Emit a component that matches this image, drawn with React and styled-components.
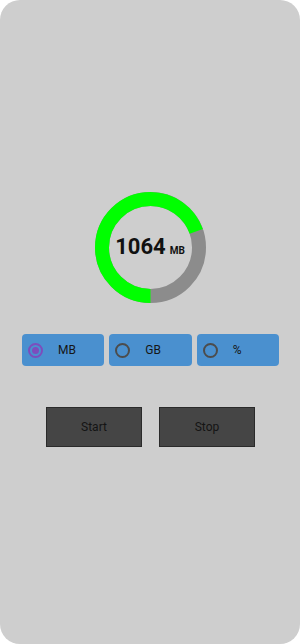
import React, { useState } from "react";
import styled, { createGlobalStyle } from "styled-components";

const GlobalStyle = createGlobalStyle`
  html, body {
    margin: 0;
    padding: 0;
    background: #ffffff;
    font-family: Roboto, "Noto Sans", sans-serif;
  }
`;

const UNITS = ["MB", "GB", "%"];

const Screen = styled.div`
  width: 300px;
  height: 644px;
  box-sizing: border-box;
  background: #cecece;
  border-radius: 20px;
  padding-top: 192px;
  display: flex;
  flex-direction: column;
  align-items: center;
`;

const Gauge = styled.div`
  position: relative;
  width: 111px;
  height: 111px;
`;

const GaugeLabel = styled.div`
  position: absolute;
  inset: 0;
  display: flex;
  align-items: baseline;
  justify-content: center;
  gap: 4px;
  padding-top: 44px;
  box-sizing: border-box;
  color: #111;
  font-weight: 700;
`;

const Value = styled.span`
  font-size: 22px;
  line-height: 1;
`;

const Unit = styled.span`
  font-size: 10px;
`;

const RadioRow = styled.div`
  align-self: stretch;
  display: flex;
  gap: 5px;
  padding: 0 21px 0 22px;
  margin-top: 31px;
`;

const RadioBox = styled.label`
  flex: 1;
  height: 32px;
  border-radius: 4px;
  background: #4a90cf;
  display: flex;
  align-items: center;
  padding-left: 6px;
  gap: 15px;
  cursor: pointer;
  color: #161616;
  font-size: 12px;
`;

const Dot = styled.span`
  width: 15px;
  height: 15px;
  box-sizing: border-box;
  border-radius: 50%;
  border: 2px solid ${p => (p.$on ? "#7c4dbd" : "#4c4c4c")};
  display: flex;
  align-items: center;
  justify-content: center;
  &::after {
    content: "";
    width: 7px;
    height: 7px;
    border-radius: 50%;
    background: ${p => (p.$on ? "#7c4dbd" : "transparent")};
  }
`;

const ButtonRow = styled.div`
  display: flex;
  gap: 17px;
  margin-top: 41px;
  padding-left: 1px;
`;

const ActionButton = styled.button`
  width: 96px;
  height: 40px;
  box-sizing: border-box;
  background: #454545;
  border: 1px solid #2a2a2a;
  border-radius: 0;
  color: #141414;
  font-family: Roboto, "Noto Sans", sans-serif;
  font-size: 12px;
  padding: 0;
`;

const Ring = ({ fraction }) => {
  const r = 48.5;
  const c = 2 * Math.PI * r;
  return (
    <svg width="111" height="111" viewBox="0 0 111 111">
      <circle cx="55.5" cy="55.5" r={r} fill="none" stroke="#8c8c8c" strokeWidth="14" />
      <circle
        cx="55.5"
        cy="55.5"
        r={r}
        fill="none"
        stroke="#00ff00"
        strokeWidth="14"
        strokeDasharray={`${c * fraction} ${c}`}
        transform="rotate(90 55.5 55.5)"
      />
    </svg>
  );
};

export default function App() {
  const [unit, setUnit] = useState("MB");
  return (
    <>
      <GlobalStyle />
      <Screen>
        <Gauge>
          <Ring fraction={0.695} />
          <GaugeLabel>
            <Value>1064</Value>
            <Unit>MB</Unit>
          </GaugeLabel>
        </Gauge>
        <RadioRow>
          {UNITS.map(u => (
            <RadioBox key={u} onClick={() => setUnit(u)}>
              <Dot $on={unit === u} />
              {u}
            </RadioBox>
          ))}
        </RadioRow>
        <ButtonRow>
          <ActionButton>Start</ActionButton>
          <ActionButton>Stop</ActionButton>
        </ButtonRow>
      </Screen>
    </>
  );
}
